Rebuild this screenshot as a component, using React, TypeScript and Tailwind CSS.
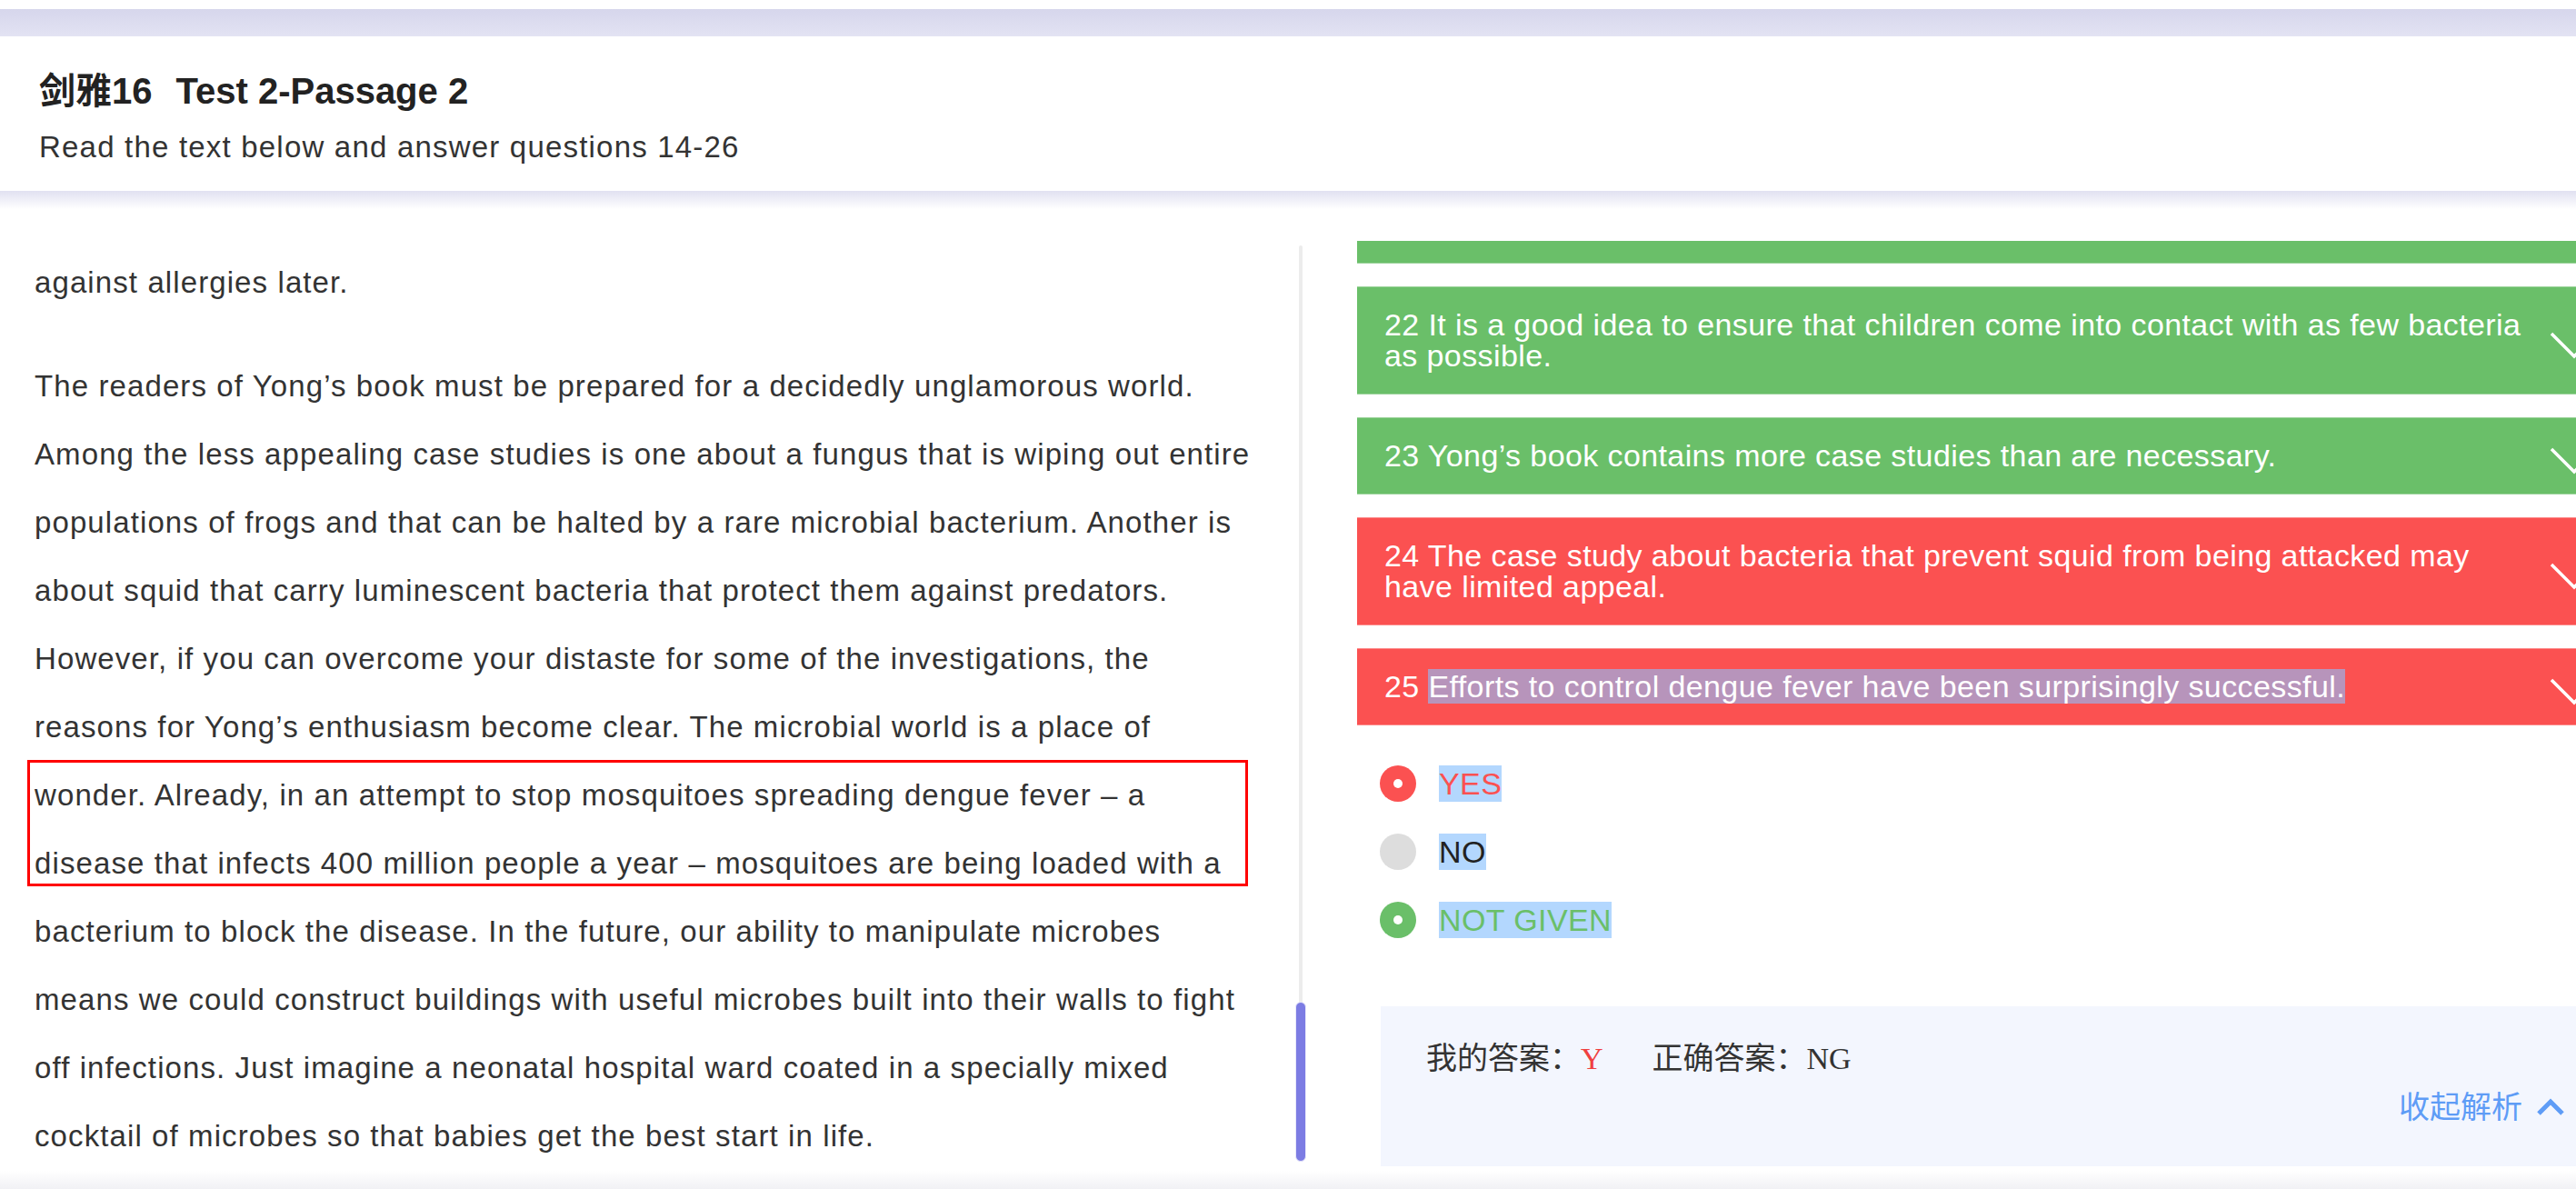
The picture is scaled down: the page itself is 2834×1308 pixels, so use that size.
import React from "react";

const passageLines = [
  "The readers of Yong’s book must be prepared for a decidedly unglamorous world.",
  "Among the less appealing case studies is one about a fungus that is wiping out entire",
  "populations of frogs and that can be halted by a rare microbial bacterium. Another is",
  "about squid that carry luminescent bacteria that protect them against predators.",
  "However, if you can overcome your distaste for some of the investigations, the",
  "reasons for Yong’s enthusiasm become clear. The microbial world is a place of",
  "wonder. Already, in an attempt to stop mosquitoes spreading dengue fever – a",
  "disease that infects 400 million people a year – mosquitoes are being loaded with a",
  "bacterium to block the disease. In the future, our ability to manipulate microbes",
  "means we could construct buildings with useful microbes built into their walls to fight",
  "off infections. Just imagine a neonatal hospital ward coated in a specially mixed",
  "cocktail of microbes so that babies get the best start in life.",
];

function ChevronDown() {
  return (
    <svg
      className="absolute left-[1312px] top-[calc(50%-10px)]"
      width="54"
      height="30"
      viewBox="0 0 54 30"
      fill="none"
    >
      <polyline points="2,2 27,27 52,2" stroke="#ffffff" strokeWidth="3.5" />
    </svg>
  );
}

function Block({
  color,
  children,
}: {
  color: "green" | "red";
  children: React.ReactNode;
}) {
  const cls =
    color === "green"
      ? "bg-[#6abf69] border-[#9ed49d]"
      : "bg-[#fb5151] border-[#fd8c8c]";
  return (
    <div
      className={`relative mt-[25px] border-y pl-[30px] pr-[60px] pt-[24px] pb-[25px] text-[34px] leading-[34px] tracking-[0.4px] text-white whitespace-nowrap ${cls}`}
    >
      {children}
      <ChevronDown />
    </div>
  );
}

export default function App() {
  return (
    <div className="w-[2834px] h-[1308px] overflow-hidden bg-white flex flex-col font-['Liberation_Sans','Noto_Sans_CJK_SC',sans-serif]">
      <div className="h-[10px] bg-white shrink-0" />
      <div className="h-[30px] shrink-0 bg-gradient-to-b from-[#d6d6ec] to-[#e3e3f3]" />
      <header className="h-[170px] shrink-0 bg-white pl-[43px] pt-[36px]">
        <h1 className="text-[40px] leading-[48px] font-bold text-[#222] whitespace-nowrap">
          剑雅16<span className="ml-[26px]">Test 2-Passage 2</span>
        </h1>
        <p className="mt-[18px] text-[33px] leading-[40px] tracking-[1.2px] text-[#333] whitespace-nowrap">
          Read the text below and answer questions 14-26
        </p>
      </header>

      <div className="relative flex-1 flex min-h-0">
        <div className="absolute top-0 left-0 right-0 h-[20px] bg-gradient-to-b from-[#e1e1f1] to-[#ffffff00] z-10" />

        {/* passage */}
        <div className="relative w-[1425px] shrink-0 overflow-hidden pl-[38px] pt-[63px] text-[33px] leading-[75px] tracking-[1.1px] text-[#333]">
          <div className="mb-[39px] whitespace-nowrap">against allergies later.</div>
          {passageLines.map((l, i) => (
            <div key={i} className="whitespace-nowrap">
              {l}
            </div>
          ))}
          <div className="absolute left-[30px] top-[626px] w-[1343px] h-[139px] border-[3px] border-[#f00]" />
        </div>

        {/* scrollbar */}
        <div className="w-[12px] shrink-0 pt-[60px] pb-[10px] flex flex-col items-center">
          <div className="relative flex-1 w-[4px] rounded-full bg-[#ececec]">
            <div className="absolute bottom-0 left-[-4px] w-[12px] h-[176px] rounded-full bg-[#7c7ce3] border border-[#e9e9fb]" />
          </div>
        </div>

        {/* questions */}
        <div className="flex-1 min-w-0 overflow-hidden pl-[56px] pt-[55px]">
          <div className="h-[25px] bg-[#6abf69] border-b border-[#9ed49d]" />
          <Block color="green">
            22 It is a good idea to ensure that children come into contact with as few bacteria
            <br />
            as possible.
          </Block>
          <Block color="green">23 Yong’s book contains more case studies than are necessary.</Block>
          <Block color="red">
            24 The case study about bacteria that prevent squid from being attacked may
            <br />
            have limited appeal.
          </Block>
          <Block color="red">
            25 <span className="bg-[#b794bb]">Efforts to control dengue fever have been surprisingly successful.</span>
          </Block>

          <div className="mt-[44px] ml-[25px] flex flex-col gap-[35px] text-[34px] leading-[40px] tracking-[0.4px]">
            <div className="flex items-center gap-[25px] h-[40px]">
              <div className="w-[40px] h-[40px] rounded-full bg-[#fb5151] flex items-center justify-center">
                <div className="w-[10px] h-[10px] rounded-full bg-white" />
              </div>
              <span className="bg-[#b3d7fe] text-[#fb5151]">YES</span>
            </div>
            <div className="flex items-center gap-[25px] h-[40px]">
              <div className="w-[40px] h-[40px] rounded-full bg-[#dddddd]" />
              <span className="bg-[#b3d7fe] text-[#222]">NO</span>
            </div>
            <div className="flex items-center gap-[25px] h-[40px]">
              <div className="w-[40px] h-[40px] rounded-full bg-[#6abf69] flex items-center justify-center">
                <div className="w-[10px] h-[10px] rounded-full bg-white" />
              </div>
              <span className="bg-[#b3d7fe] text-[#6abf69]">NOT GIVEN</span>
            </div>
          </div>

          <div className="mt-[75px] ml-[26px] bg-[#f3f6fe] pt-[38px] pb-[45px]">
            <div className="pl-[50px] text-[34px] leading-[40px] text-[#333] whitespace-nowrap font-['Liberation_Serif','Noto_Sans_CJK_SC',serif]">
              我的答案：<span className="text-[#f04040]">Y</span>
              <span className="ml-[54px]">正确答案：NG</span>
            </div>
            <div className="mt-[13px] pr-[12px] flex items-center justify-end gap-[15px] text-[34px] leading-[40px] text-[#5e9cf6]">
              <span>收起解析</span>
              <svg width="32" height="20" viewBox="0 0 32 20" fill="none">
                <polyline points="3,17 16,4 29,17" stroke="#5e9cf6" strokeWidth="5" />
              </svg>
            </div>
          </div>
        </div>
      </div>

      <div className="h-[20px] shrink-0 bg-gradient-to-b from-[#ffffff] to-[#f1f1f5]" />
    </div>
  );
}
